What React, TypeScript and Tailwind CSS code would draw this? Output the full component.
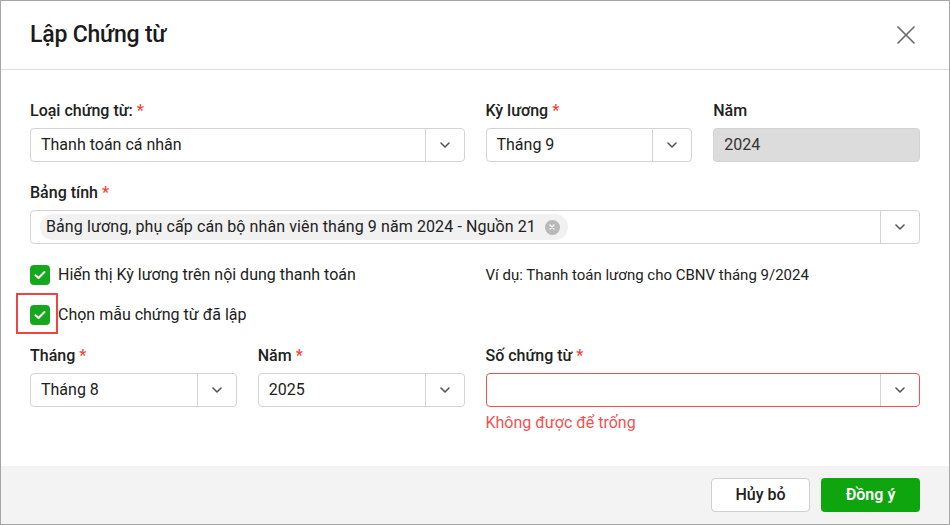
import type { FC, ReactNode } from 'react'

const font = { fontFamily: 'Roboto, "Noto Sans", Arial, sans-serif' }

const Chevron: FC = () => (
  <svg width="14" height="14" viewBox="0 0 14 14" fill="none">
    <path d="M3 5l4 4 4-4" stroke="#555" strokeWidth="1.6" strokeLinecap="round" strokeLinejoin="round" />
  </svg>
)

const Check: FC = () => (
  <span className="flex h-5 w-5 shrink-0 items-center justify-center rounded-[4px] bg-[#16a81c]">
    <svg width="12" height="10" viewBox="0 0 12 10" fill="none">
      <path d="M1.5 5.2l3 2.8L10.5 2" stroke="#fff" strokeWidth="2" strokeLinecap="round" strokeLinejoin="round" />
    </svg>
  </span>
)

type LabelProps = { text: string; required?: boolean }

const Label: FC<LabelProps> = ({ text, required }) => (
  <div className="mb-[7px] h-5 text-[16px] leading-5 font-medium text-[#212121]">
    {text}
    {required && <span className="ml-1 text-[#f44336]">*</span>}
  </div>
)

type SelectProps = { children?: ReactNode; error?: boolean }

const Select: FC<SelectProps> = ({ children, error }) => (
  <div
    className={`flex h-[34px] items-stretch rounded-[4px] border bg-white ${
      error ? 'border-[#f05252]' : 'border-[#d3d3d3]'
    }`}
  >
    <div className="flex min-w-0 flex-1 items-center pl-[10px] text-[16px] text-[#212121]">{children}</div>
    <div className="flex w-[39px] items-center justify-center border-l border-[#d3d3d3]">
      <Chevron />
    </div>
  </div>
)

export default function App() {
  return (
    <div style={font} className="flex h-[525px] w-[950px] flex-col border border-[#a6a6a6] bg-white text-[#212121]">
      <div className="flex h-[69px] shrink-0 items-center justify-between border-b border-[#dcdcdc] pl-[29px] pr-[34px]">
        <h1 className="text-[23px] font-medium tracking-[-0.2px] text-[#1a1a1a]">Lập Chứng từ</h1>
        <svg width="18" height="18" viewBox="0 0 18 18" fill="none">
          <path d="M1 1l16 16M17 1L1 17" stroke="#6b6b6b" strokeWidth="1.7" strokeLinecap="round" />
        </svg>
      </div>

      <div className="flex-1 px-[29px] pt-[31px]">
        <div className="grid grid-cols-4 gap-x-[21px]">
          <div className="col-span-2">
            <Label text="Loại chứng từ:" required />
            <Select>Thanh toán cá nhân</Select>
          </div>
          <div>
            <Label text="Kỳ lương" required />
            <Select>Tháng 9</Select>
          </div>
          <div>
            <Label text="Năm" />
            <div className="flex h-[34px] items-center rounded-[4px] border border-[#d3d3d3] bg-[#dcdcdc] pl-[10px] text-[16px] text-[#333]">
              2024
            </div>
          </div>
        </div>

        <div className="mt-[21px]">
          <Label text="Bảng tính" required />
          <Select>
            <span className="-ml-[1px] flex h-[26px] items-center gap-[9px] rounded-full bg-[#f1f1f1] pl-[6px] pr-[8px] text-[16px] tracking-[0.1px]">
              Bảng lương, phụ cấp cán bộ nhân viên tháng 9 năm 2024 - Nguồn 21
              <span className="flex h-[15px] w-[15px] items-center justify-center rounded-full bg-[#b8b8b8]">
                <svg width="6" height="6" viewBox="0 0 6 6">
                  <path d="M1 1l4 4M5 1L1 5" stroke="#fff" strokeWidth="1.3" strokeLinecap="round" />
                </svg>
              </span>
            </span>
          </Select>
        </div>

        <div className="mt-[21px] grid h-5 grid-cols-4 gap-x-[21px] leading-5">
          <div className="col-span-2 flex items-center gap-2 text-[16px]">
            <Check />
            <span>Hiển thị Kỳ lương trên nội dung thanh toán</span>
          </div>
          <div className="col-span-2 flex items-center text-[15px] text-[#222]">
            Ví dụ: Thanh toán lương cho CBNV tháng 9/2024
          </div>
        </div>

        <div className="mt-[20px] flex h-5 items-center gap-2 text-[16px] leading-5">
          <span className="relative">
            <Check />
            <span className="absolute -top-[12px] -left-[14px] h-[41px] w-[42px] border-2 border-[#ef4444]" />
          </span>
          <span>Chọn mẫu chứng từ đã lập</span>
        </div>

        <div className="mt-[21px] grid grid-cols-4 gap-x-[21px]">
          <div>
            <Label text="Tháng" required />
            <Select>Tháng 8</Select>
          </div>
          <div>
            <Label text="Năm" required />
            <Select>2025</Select>
          </div>
          <div className="col-span-2">
            <Label text="Số chứng từ" required />
            <Select error />
            <div className="mt-[6px] text-[16px] leading-5 text-[#f05252]">Không được để trống</div>
          </div>
        </div>
      </div>

      <div className="flex h-[58px] shrink-0 items-center justify-end gap-[11px] bg-[#f3f3f3] px-[29px]">
        <button
          type="button"
          className="h-[34px] w-[99px] rounded-[4px] border border-[#cfcfcf] bg-white text-[16px] font-medium text-[#212121]"
        >
          Hủy bỏ
        </button>
        <button type="button" className="h-[34px] w-[99px] rounded-[4px] bg-[#0ea50e] text-[16px] font-semibold text-white">
          Đồng ý
        </button>
      </div>
    </div>
  )
}
